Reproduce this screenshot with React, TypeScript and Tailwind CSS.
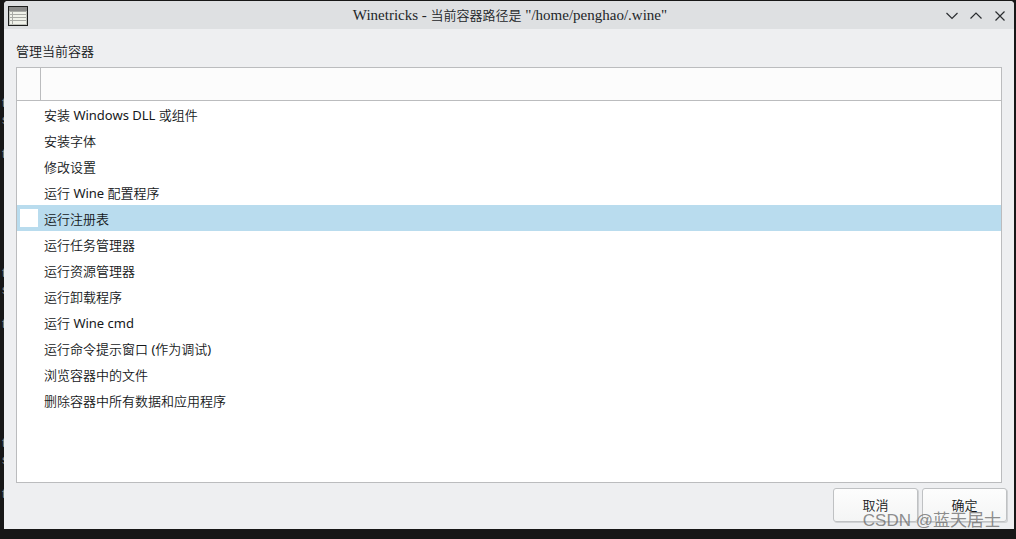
import { useState } from "react";

const actions = [
  "安装 Windows DLL 或组件",
  "安装字体",
  "修改设置",
  "运行 Wine 配置程序",
  "运行注册表",
  "运行任务管理器",
  "运行资源管理器",
  "运行卸载程序",
  "运行 Wine cmd",
  "运行命令提示窗口 (作为调试)",
  "浏览容器中的文件",
  "删除容器中所有数据和应用程序",
];

function WindowIcon() {
  return (
    <svg width="20" height="20" viewBox="0 0 20 20" shapeRendering="crispEdges" aria-hidden="true">
      <rect x="0" y="0" width="20" height="20" fill="#1d1f1e" />
      <rect x="1" y="1" width="18" height="18" fill="#c2c4be" />
      <rect x="1" y="1" width="18" height="4" fill="#8b8c8b" />
      <rect x="2" y="5" width="16" height="13" fill="#f0f2ea" />
      <path d="M2 5.5h16M2 8.5h16M2 11.5h16M2 14.5h16" stroke="#a9aba6" />
      <path d="M4.5 5v13" stroke="#a9aba6" />
    </svg>
  );
}

function TitleButton({ label, d }: { label: string; d: string }) {
  return (
    <button type="button" aria-label={label} className="flex size-6 items-center justify-center">
      <svg width="12" height="12" viewBox="0 0 12 12" fill="none" stroke="#2b2e31" strokeWidth="1.2" aria-hidden="true">
        <path d={d} />
      </svg>
    </button>
  );
}

function TitleBar() {
  return (
    <header className="grid h-7 shrink-0 grid-cols-[1fr_auto_1fr] items-center bg-[#dee0e2] pr-0.5 pl-1">
      <WindowIcon />
      <h1 className="font-['Liberation_Serif','Noto_Sans_CJK_SC_DemiLight','Noto_Sans_CJK_SC_Light','Noto_Sans_CJK_SC',serif] text-[15px] leading-7 text-[#232629]">
        Winetricks - <span className="text-[13px]">当前容器路径是</span> "/home/penghao/.wine"
      </h1>
      <div className="flex justify-end">
        <TitleButton label="最小化" d="M0.5 3L6 8.5L11.5 3" />
        <TitleButton label="最大化" d="M0.5 8.5L6 3L11.5 8.5" />
        <TitleButton label="关闭" d="M1.5 1.5L10.5 10.5M10.5 1.5L1.5 10.5" />
      </div>
    </header>
  );
}

function TerminalEdge() {
  return (
    <div
      aria-hidden="true"
      className="absolute inset-y-0 left-0 w-1 overflow-hidden pt-[94px] pl-0.5 font-['Liberation_Sans',sans-serif] text-[13px] leading-[17px] text-[#8c8c8c]"
    >
      {[0, 1, 2].map((block) => (
        <div key={block} className="h-[170px]">
          <div>t</div>
          <div>s</div>
          <div className="pt-[17px]">t</div>
        </div>
      ))}
    </div>
  );
}

export default function App() {
  const [selected, setSelected] = useState(4);
  const button =
    "h-[34px] w-[85px] rounded-[3px] border border-[#bfc1c3] bg-linear-to-b from-[#fdfdfd] to-[#f4f5f5] shadow-[1px_1px_0_#d0d2d4]";

  return (
    <div className="relative flex min-h-screen flex-col bg-[#171717] pt-px pr-0.5 pb-2.5 pl-1 font-['Noto_Sans','Noto_Sans_CJK_SC_DemiLight','Noto_Sans_CJK_SC_Light','Noto_Sans_CJK_SC',sans-serif] text-[13px] leading-[26px] text-[#15181a]">
      <TerminalEdge />
      <main className="flex flex-1 flex-col overflow-hidden rounded-t-[4px] bg-[#eeeff1]">
        <TitleBar />
        <section className="flex flex-1 flex-col px-3 pt-2.5">
          <h2 className="h-7 leading-6">管理当前容器</h2>
          <div className="flex-1 border border-[#bbbcbe] bg-white">
            <table className="w-full table-fixed border-separate border-spacing-0 text-left">
              <colgroup>
                <col className="w-6" />
                <col />
              </colgroup>
              <thead>
                <tr className="h-[33px] bg-[#fcfcfc]">
                  <th scope="col" aria-label="选择" className="border-r border-b border-[#bbbcbe] p-0" />
                  <th scope="col" aria-label="操作" className="border-b border-[#bbbcbe] p-0" />
                </tr>
              </thead>
              <tbody>
                {actions.map((action, i) => (
                  <tr key={action} className={i === selected ? "bg-[#b9dcee]" : "bg-white"}>
                    <td className="h-[26px] p-0 pl-[3px]">
                      <input
                        id={`action-${i}`}
                        type="radio"
                        name="action"
                        checked={i === selected}
                        onChange={() => setSelected(i)}
                        className="block size-[18px] appearance-none bg-white"
                      />
                    </td>
                    <td className="h-[26px] p-0 pl-[3px]">
                      <label htmlFor={`action-${i}`} className="block pt-0.5 leading-6">
                        {action}
                      </label>
                    </td>
                  </tr>
                ))}
              </tbody>
            </table>
          </div>
        </section>
        <footer className="relative flex justify-end gap-1 pt-[5px] pr-[7px] pb-[7px]">
          <button type="button" className={button}>取消</button>
          <button type="button" className={button}>确定</button>
          <span className="pointer-events-none absolute right-[13px] -bottom-0.5 font-['Liberation_Sans','Noto_Sans_CJK_SC',sans-serif] text-[17px] leading-5 text-[#707070]/80">
            CSDN @蓝天居士
          </span>
        </footer>
      </main>
    </div>
  );
}
